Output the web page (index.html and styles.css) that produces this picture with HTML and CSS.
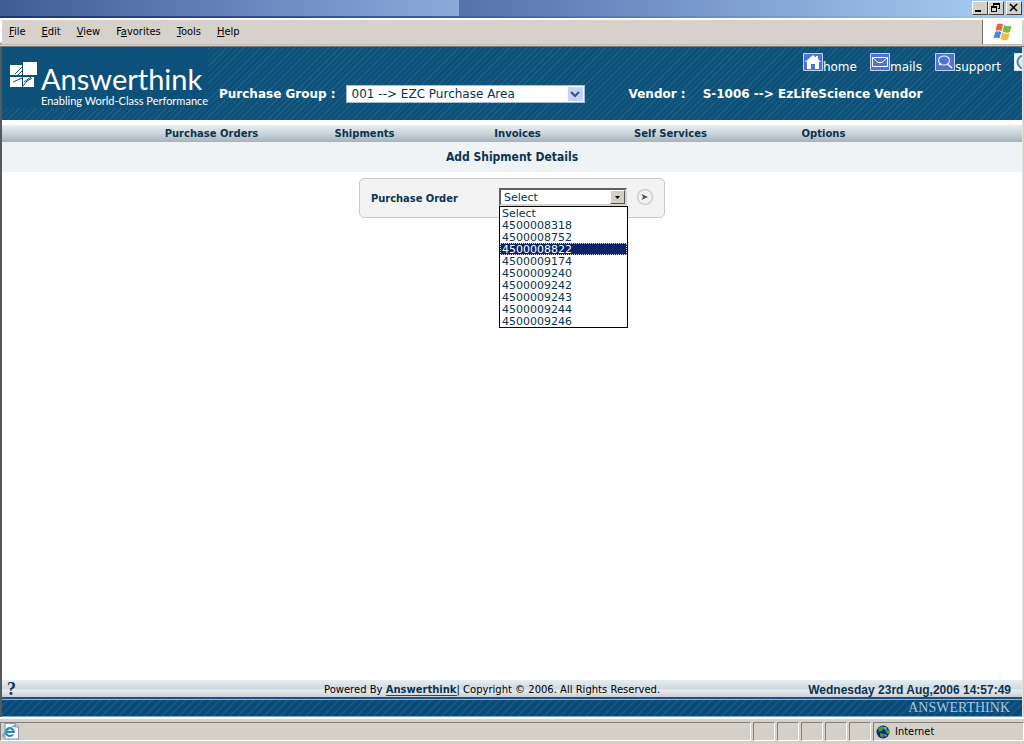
FILE: index.html
```html
<!DOCTYPE html>
<html lang="en">
<head>
<meta charset="utf-8">
<title>Add Shipment Details</title>
<link rel="stylesheet" href="styles.css">
</head>
<body>
<div class="window">
  <div class="titlebar">
    <button class="winbtn" type="button" aria-label="Minimize"><svg width="11" height="10" viewBox="0 0 11 10"><path d="M1 7h6v2H1z"/></svg></button>
    <button class="winbtn" type="button" aria-label="Restore"><svg width="11" height="10" viewBox="0 0 11 10"><path d="M3 0h7v6H8V5h1V2H4v1H3zM1 3h6v6H1zM2 5v3h4V5z" fill-rule="evenodd"/></svg></button>
    <button class="winbtn winbtn-close" type="button" aria-label="Close"><svg width="11" height="10" viewBox="0 0 11 10"><path d="M2 1l7 7M9 1l-7 7" stroke="#000" stroke-width="1.7"/></svg></button>
  </div>
  <div class="menubar">
    <nav class="menus">
      <button type="button"><u>F</u>ile</button>
      <button type="button"><u>E</u>dit</button>
      <button type="button"><u>V</u>iew</button>
      <button type="button">F<u>a</u>vorites</button>
      <button type="button"><u>T</u>ools</button>
      <button type="button"><u>H</u>elp</button>
    </nav>
    <div class="flag">
      <svg width="20" height="18" viewBox="0 0 20 18">
        <path d="M4 1.500Q7-.5 10 1.500L8.500 8Q5.500 6.500 2.500 8z" fill="#e2673c"/>
        <path d="M11 2Q14 4 18.500 2.500L17 9Q13 10.500 9.500 8.500z" fill="#7cbb42"/>
        <path d="M2.200 9Q5.200 7.500 8.200 9L6.500 15.500Q3.500 14 .5 15.500z" fill="#4f86d6"/>
        <path d="M9.200 9.500Q12.500 11.500 16.700 10L15 16.500Q11 18 7.500 16z" fill="#f3bd3c"/>
      </svg>
    </div>
  </div>

  <div class="page">
    <header class="banner">
      <div class="logo">
        <svg class="logo-mark" width="28" height="26" viewBox="0 0 28 26">
          <path d="M0 3h12v10H0zM0 15h12v10H0zM13 15h11v10H13z" fill="#fff"/>
          <path d="M13 0h14v13H13z" fill="#fff"/>
          <path d="M5 12l7-7M8 13l4-4M3 20l9-4M14 20l7-5M13 24l4-5 5-3" fill="none" stroke="#0d517c" stroke-width="1"/>
        </svg>
        <div class="logo-text">
          <div class="logo-name">Answerthink</div>
          <div class="logo-tag">Enabling World-Class Performance</div>
        </div>
      </div>
      <div class="banner-main">
        <div class="quick">
          <a href="#"><svg width="20" height="18" viewBox="0 0 20 18"><path d="M.5.5h19v17H.5z" fill="#4e73d3" stroke="#c4d4f5"/><path d="M2 9l8-7 3 2.500V3h2v3l3 3h-2v7h-4v-5H8v5H4V9z" fill="#fff"/></svg>home</a>
          <a href="#"><svg width="20" height="18" viewBox="0 0 20 18"><path d="M.5.5h19v17H.5z" fill="#4e73d3" stroke="#c4d4f5"/><path d="M2.500 4.500h15v9h-15zM2.500 4.500L8 9.500h4l5.500-5" fill="none" stroke="#fff"/></svg>mails</a>
          <a href="#"><svg width="20" height="18" viewBox="0 0 20 18"><path d="M.5.5h19v17H.5z" fill="#4e73d3" stroke="#c4d4f5"/><ellipse cx="9" cy="7.500" rx="5.500" ry="4.500" fill="none" stroke="#e8f0ff" stroke-width="1.200"/><path d="M12.500 11l4.500 4M6 10.500l-2 1.500" stroke="#fff" stroke-width="1.500"/></svg>support</a>
          <a href="#" aria-label="Log out"><svg width="20" height="18" viewBox="0 0 20 18"><path d="M.5.5h19v17H.5z" fill="#fff" stroke="#dfeafa"/><circle cx="10" cy="9" r="6.500" fill="#dbe8f8" stroke="#4e7fc3" stroke-width="2"/></svg></a>
        </div>
        <div class="context">
          <label class="ctx-label" for="group">Purchase Group :</label>
          <div class="xp-select">
            <select id="group"><option>001 --&gt; EZC Purchase Area</option></select>
            <span class="xp-arrow"><svg width="10" height="7" viewBox="0 0 10 7"><path d="M1 1l4 4 4-4" fill="none" stroke="#3d5282" stroke-width="2.200"/></svg></span>
          </div>
          <span class="ctx-label vendor-label">Vendor :</span>
          <span class="vendor">S-1006 --&gt; EzLifeScience Vendor</span>
        </div>
      </div>
    </header>

    <nav class="tabs">
      <a href="#">Purchase Orders</a>
      <a href="#">Shipments</a>
      <a href="#">Invoices</a>
      <a href="#">Self Services</a>
      <a href="#">Options</a>
    </nav>
    <h1 class="heading">Add Shipment Details</h1>

    <main class="content">
      <form class="picker">
        <label for="po">Purchase Order</label>
        <div class="combo">
          <select id="po" class="combo-box"><option>Select</option></select>
          <span class="combo-arrow"><svg width="5" height="3" viewBox="0 0 5 3"><path d="M0 0h5L2.500 3z"/></svg></span>
          <select class="combo-list" size="10" aria-label="Purchase Order options">
            <option>Select</option>
            <option>4500008318</option>
            <option>4500008752</option>
            <option selected>4500008822</option>
            <option>4500009174</option>
            <option>4500009240</option>
            <option>4500009242</option>
            <option>4500009243</option>
            <option>4500009244</option>
            <option>4500009246</option>
          </select>
        </div>
        <button class="go" type="button" aria-label="Go"><svg width="18" height="18" viewBox="0 0 18 18"><circle cx="9" cy="9" r="7.500" fill="#f1f1f1" stroke="#cdcdcd" stroke-width="1.500"/><path d="M5.500 6L12 9l-6.500 3L7 9z" fill="#555"/></svg></button>
      </form>
    </main>

    <footer class="foot">
      <a class="help" href="#">?</a>
      <p class="legal">Powered By <a href="#">Answerthink</a>| Copyright © 2006. All Rights Reserved.</p>
      <time class="clock">Wednesday 23rd Aug,2006 14:57:49</time>
    </footer>
    <div class="strip">ANSWERTHINK</div>
  </div>

  <div class="status">
    <div class="pane pane-main"><svg width="18" height="17" viewBox="0 0 18 17"><path d="M3 .5h10l3.500 3.500v12H3z" fill="#f8fbff" stroke="#8793ae"/><path d="M13 .5V4h3.500" fill="#cdd6e8" stroke="#8793ae"/><path d="M11 11.500A4 4 0 1 1 11.800 9H5" fill="none" stroke="#2683bd" stroke-width="2"/><path d="M2 14Q-1 12 7 6t6-2" fill="none" stroke="#43a3d4" stroke-width="1.200"/></svg></div>
    <div class="pane"></div><div class="pane"></div><div class="pane"></div><div class="pane"></div><div class="pane"></div>
    <div class="pane pane-zone"><svg width="14" height="14" viewBox="0 0 14 14"><circle cx="7" cy="7" r="6.500" fill="#17246e"/><path d="M2 3l4-2 2 2-2 3-3 1zM9 4l4 1v4l-3-1zM4 8l4 1-1 4-3-2z" fill="#3f9d46"/><path d="M7 2l3 0 1 2-2 1zM8 9l3 1-2 2z" fill="#6fb3e6"/></svg>Internet</div>
  </div>
</div>
</body>
</html>
```
FILE: styles.css
```css
* { box-sizing: border-box; }

body {
  margin: 0;
  font-family: "DejaVu Sans", Verdana, sans-serif;
  font-size: 10px;
  color: #0b3350;
  background: #d4d0c8;
}

a { color: inherit; text-decoration: none; }
button, select { font: inherit; color: #0b3350; }

.window {
  display: flex;
  flex-direction: column;
  height: 100vh;
  overflow: hidden;
}

/* window chrome */
.titlebar {
  display: flex;
  justify-content: flex-end;
  align-items: center;
  flex: none;
  height: 18px;
  padding: 0 2px;
  border-bottom: 2px solid;
  border-image: linear-gradient(90deg, #1d347c, #4464ac 50%, #a6caf0) 1;
  background: linear-gradient(90deg, #405c98 0%, #8aabdb 459px, #5472ad 459px, #a6caf0 97%);
}
.winbtn {
  display: flex;
  width: 16px;
  height: 14px;
  padding: 1px;
  background: #d4d0c8;
  border: 1px solid;
  border-color: #fff #404040 #404040 #fff;
}
.winbtn-close { margin-left: 2px; }

.menubar {
  display: flex;
  flex: none;
  height: 29px;
  background: #d6d1ca;
  border: 2px solid;
  border-right-width: 0;
  border-bottom-width: 3px;
  border-image: linear-gradient(#fff, #fff 84%, #8c8a86 88%, #e8e6e0 94%, #4b4a48) 2 0 3 2;
}
.menus {
  display: flex;
  flex: 1;
  align-items: center;
  gap: 16px;
  padding: 0 0 2px 7px;
}
.menus button {
  padding: 0;
  border: 0;
  background: none;
  font: 11px "DejaVu Sans Condensed", "DejaVu Sans", Tahoma, sans-serif;
  color: #000;
}
.flag {
  display: flex;
  align-items: center;
  justify-content: center;
  width: 40px;
  margin-right: 2px;
  background: #fff;
  border-left: 1px solid #777;
}

/* banner */
.page {
  display: flex;
  flex-direction: column;
  flex: 1;
  margin-right: 1px;
  border-left: 2px solid #55585c;
  border-right: 1px solid #e4e2dc;
  background: #fff;
}
.banner {
  display: flex;
  height: 73px;
  overflow: hidden;
  color: #fff;
  background: repeating-linear-gradient(135deg, #0d517b 0 3px, #1c6085 3px 4px);
}
.logo {
  display: flex;
  gap: 3px;
  flex: none;
  width: 206px;
  height: 61px;
  padding: 15px 0 0 8px;
  background: #0d517b;
}
.logo-mark { flex: none; }
.logo-text { white-space: nowrap; font-family: Lato, sans-serif; }
.logo-name { font-size: 29px; line-height: 33px; }
.logo-tag { font-size: 11px; line-height: 12px; }
.banner-main {
  display: flex;
  flex-direction: column;
  flex: 1;
  min-width: 0;
  padding: 6px 0 0 11px;
}
.quick {
  display: flex;
  justify-content: flex-end;
  gap: 13px;
  height: 30px;
  margin-right: -12px;
  font-size: 12px;
  line-height: 28px;
}
.quick a { display: flex; }
.quick svg { flex: none; }
.context {
  display: flex;
  align-items: center;
  height: 22px;
  white-space: nowrap;
}
.ctx-label { font-size: 12px; font-weight: bold; }
.xp-select {
  position: relative;
  width: 239px;
  margin-left: 10px;
}
.xp-select select {
  display: block;
  width: 100%;
  height: 18px;
  padding: 0 5px;
  appearance: none;
  border: 1px solid #9fc0d6;
  border-radius: 0;
  background: #fff;
  font-size: 12px;
}
.xp-arrow {
  position: absolute;
  top: 2px;
  right: 2px;
  display: grid;
  place-items: center;
  width: 15px;
  height: 14px;
  background: #c3d3fb;
  pointer-events: none;
}
.vendor-label { margin-left: 44px; }
.vendor { margin-left: 17px; font-size: 12px; font-weight: bold; }

/* navigation */
.tabs {
  display: grid;
  grid-template-columns: repeat(5, 1fr);
  height: 17px;
  margin-top: 5px;
  padding: 0 122px 0 133px;
  line-height: 17px;
  text-align: center;
  font-weight: bold;
  background: linear-gradient(#e9eef1, #cad4da 50%, #a4b3bd);
}
.heading {
  margin: 0;
  height: 30px;
  font: bold 12px/30px "DejaVu Sans Condensed", "DejaVu Sans", Tahoma, sans-serif;
  text-align: center;
  background: #eff3f5;
}

/* order picker */
.content { flex: 1; padding-top: 6px; }
.picker {
  display: flex;
  align-items: center;
  width: 306px;
  height: 40px;
  margin: 0 auto;
  padding: 0 10px 0 11px;
  border: 1px solid #c9c9c9;
  border-radius: 5px;
  background: #f3f3f3;
}
.picker label {
  flex: 1;
  font: bold 11px "DejaVu Sans Condensed", "DejaVu Sans", Tahoma, sans-serif;
}
.combo { position: relative; width: 128px; margin-bottom: 2px; }
.combo-box {
  display: block;
  width: 100%;
  height: 18px;
  padding: 0 3px;
  appearance: none;
  border: 2px solid;
  border-color: #606060 #d8d5ce #d8d5ce #606060;
  border-radius: 0;
  background: #fff;
  font-size: 11px;
}
.combo-arrow {
  position: absolute;
  top: 2px;
  right: 2px;
  display: grid;
  place-items: center;
  width: 15px;
  height: 14px;
  background: #d4d0c8;
  border: 1px solid;
  border-color: #fff #555 #555 #fff;
  pointer-events: none;
}
.combo-list {
  position: absolute;
  top: 18px;
  left: 0;
  width: 129px;
  height: 122px;
  padding: 0;
  overflow: hidden;
  border: 1px solid #000;
  border-radius: 0;
  outline: 0;
  background: #fff;
  font-size: 11px;
}
.combo-list option {
  height: 12px;
  min-height: 12px;
  padding: 0 2px;
  line-height: 12px;
  color: #0b3350;
}
.combo-list option:checked {
  color: #fff;
  background: linear-gradient(#0a246a, #0a246a);
  outline: 1px dotted #d8d4e0;
  outline-offset: -1px;
}
.go {
  display: flex;
  margin: 0 0 3px 9px;
  padding: 0;
  border: 0;
  background: none;
}

/* footer */
.foot {
  display: grid;
  grid-template-columns: 317px auto 1fr;
  align-items: center;
  height: 17px;
  padding: 0 11px 0 5px;
  white-space: nowrap;
  background: linear-gradient(#e6edf1, #cfd9e1 50%, #e8ebee 60%, #cbd0d5);
}
.help { font: bold 18px/17px "Liberation Serif", serif; }
.legal { margin: 0; color: #000; }
.legal a {
  color: #0b3350;
  font-weight: bold;
  border-bottom: 1px solid #53307c;
}
.clock {
  justify-self: end;
  padding-top: 2px;
  font: bold 12px/17px "Liberation Sans", Arial, sans-serif;
}
.strip {
  height: 20px;
  padding-right: 12px;
  border-top: 2px solid #1c4f80;
  border-bottom: 1px solid #7fa9c6;
  box-shadow: inset 0 1px #8fb5d6;
  font: 14px/18px "Liberation Serif", serif;
  text-align: right;
  color: #a5c8e2;
  background: repeating-linear-gradient(135deg, #0b4a78 0 4px, #125882 4px 6px);
}

/* status bar */
.status {
  display: flex;
  flex: none;
  gap: 2px;
  height: 27px;
  padding: 3px 0;
  border-top: 2px solid #fff;
  background: #d4d0c8;
}
.pane {
  width: 22px;
  border: 1px solid;
  border-color: #808080 #fff #fff #808080;
}
.pane-main { flex: 1; padding-left: 1px; }
.pane-main svg, .pane-zone svg { display: block; }
.pane-zone {
  display: flex;
  align-items: center;
  gap: 5px;
  width: 151px;
  padding-left: 2px;
  font: 11px "DejaVu Sans Condensed", "DejaVu Sans", Tahoma, sans-serif;
  color: #000;
}
```
